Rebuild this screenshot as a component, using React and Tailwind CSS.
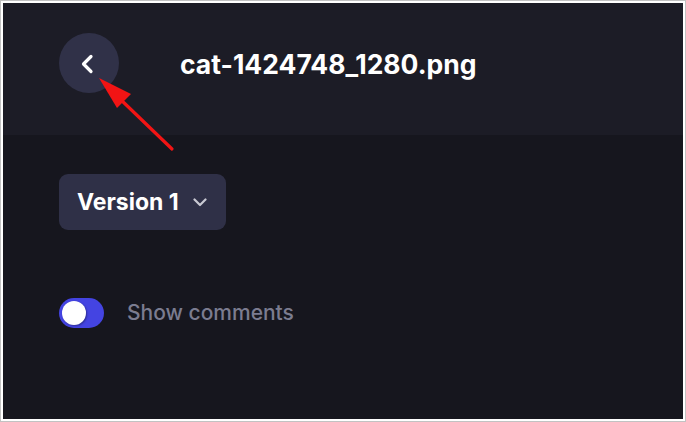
import { useState } from "react"

const font = { fontFamily: "Inter, 'Noto Sans', sans-serif" }

function BackIcon() {
  return (
    <svg width="16" height="22" viewBox="0 0 16 22" fill="none">
      <path d="M12 3.5 L4.5 11 L12 18.5" stroke="white" strokeWidth="3.2" strokeLinecap="round" strokeLinejoin="round" />
    </svg>
  )
}

function Chevron() {
  return (
    <svg width="14" height="9" viewBox="0 0 14 9" fill="none">
      <path d="M1.5 1.5 L7 7 L12.5 1.5" stroke="#c9c9d3" strokeWidth="2.2" strokeLinecap="round" strokeLinejoin="round" />
    </svg>
  )
}

export default function App() {
  const [showComments, setShowComments] = useState(true)

  return (
    <div className="relative w-[686px] h-[422px] border border-[#c2c2c2] bg-white p-[2px]" style={font}>
      <div className="flex h-full w-full flex-col bg-[#16161e]">
        {/* header */}
        <div className="flex h-[132px] items-start bg-[#1c1c26] pl-[56px] pt-[30px]">
          <button className="flex h-[60px] w-[60px] items-center justify-center rounded-full bg-[#303148] pr-[4px] pt-[2px]">
            <BackIcon />
          </button>
          <h1 className="ml-[61px] mt-[14px] text-[26.5px] font-bold leading-[34px] text-white">cat-1424748_1280.png</h1>
        </div>

        {/* body */}
        <div className="flex flex-col items-start pl-[56px] pt-[39px]">
          <button className="flex h-[56px] items-center gap-[14px] rounded-[9px] bg-[#2f3047] pl-[18px] pr-[19px]">
            <span className="text-[23px] font-bold text-white">Version 1</span>
            <Chevron />
          </button>

          <div className="mt-[67px] flex items-center gap-[23px]">
            <button
              onClick={() => setShowComments(!showComments)}
              className="flex h-[30px] w-[45px] items-center rounded-full bg-[#4444e2] px-[3px]"
            >
              <span className="h-[24px] w-[24px] rounded-full bg-white shadow-[1px_1px_2px_rgba(0,0,0,0.35)]" />
            </button>
            <span className="text-[21px] font-medium text-[#7b7c90]">Show comments</span>
          </div>
        </div>
      </div>

      {/* annotation arrow */}
      <svg className="pointer-events-none absolute left-[-1px] top-[-1px]" width="686" height="422" viewBox="0 0 686 422">
        <line x1="172" y1="149" x2="118" y2="97" stroke="#f21414" strokeWidth="3.2" strokeLinecap="round" />
        <polygon points="99,78 131,94 117,108" fill="#f21414" />
      </svg>
    </div>
  )
}
